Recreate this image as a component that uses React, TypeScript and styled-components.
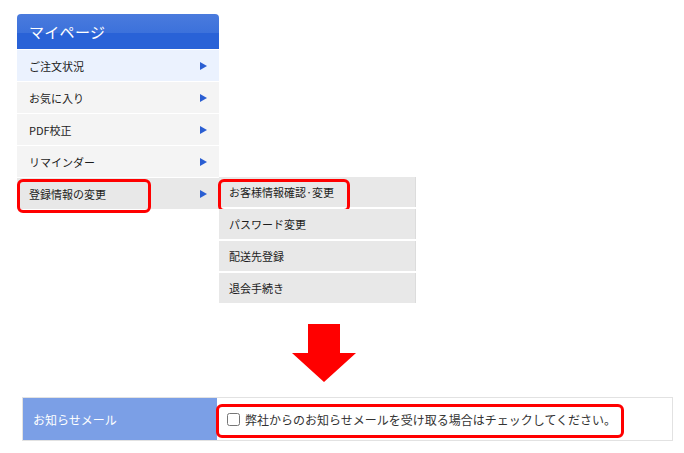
import React from 'react'
import styled, { createGlobalStyle } from 'styled-components'

const GlobalStyle = createGlobalStyle`
  body {
    margin: 0;
    background: #fff;
    font-family: "Noto Sans CJK JP", "Noto Sans", sans-serif;
    color: #1c1c1c;
  }
`

const Page = styled.div`
  width: 684px;
  height: 453px;
  padding: 14px 0 0 17px;
  box-sizing: border-box;
  overflow: hidden;
`

const Top = styled.div`
  display: flex;
  align-items: flex-start;
`

const Menu = styled.div`
  width: 202px;
  display: flex;
  flex-direction: column;
  gap: 1px;
`

const MenuHead = styled.div`
  height: 35px;
  display: flex;
  align-items: center;
  padding-left: 12px;
  border-radius: 4px 4px 0 0;
  background: linear-gradient(#4a7bdd 0%, #3c71db 54%, #2962d7 54%, #2962d7 100%);
  color: #fff;
  font-size: 15px;
  letter-spacing: 0.3px;
`

const MenuRow = styled.div<{ $tone: 'active' | 'plain' | 'open' }>`
  position: relative;
  height: 31px;
  display: flex;
  align-items: center;
  justify-content: space-between;
  padding: 0 12px;
  font-size: 11px;
  background: ${(p) => (p.$tone === 'active' ? '#ebf2fe' : p.$tone === 'open' ? '#e8e8e8' : '#f4f4f4')};
`

const Arrow = styled.span`
  width: 0;
  height: 0;
  border-top: 4.5px solid transparent;
  border-bottom: 4.5px solid transparent;
  border-left: 7px solid #2a5ed2;
`

const Highlight = styled.div<{ $l: number; $t: number; $w: number; $h: number }>`
  position: absolute;
  left: ${(p) => p.$l}px;
  top: ${(p) => p.$t}px;
  width: ${(p) => p.$w}px;
  height: ${(p) => p.$h}px;
  border: 3px solid #ff0000;
  border-radius: 6px;
  box-sizing: border-box;
  pointer-events: none;
`

const SubMenu = styled.div`
  margin-top: 163px;
  width: 197px;
  display: flex;
  flex-direction: column;
  gap: 2px;
`

const SubRow = styled.div`
  position: relative;
  height: 30px;
  display: flex;
  align-items: center;
  padding-left: 10px;
  font-size: 11px;
  background: #e8e8e8;
  border-right: 1px solid #dcdcdc;
  white-space: nowrap;
`

const Dot = styled.span`
  font-size: 6px;
  font-weight: 700;
`

const DownArrow = styled.svg`
  display: block;
  margin: 21px 0 0 275px;
`

const Table = styled.div`
  margin-top: 15px;
  margin-left: 5px;
  width: 651px;
  height: 44px;
  display: flex;
  border: 1px solid #e2e2e2;
  box-sizing: border-box;
`

const LabelCell = styled.div`
  width: 194px;
  flex-shrink: 0;
  box-sizing: border-box;
  display: flex;
  align-items: center;
  padding-left: 10px;
  background: #7b9fe6;
  color: #fff;
  font-size: 12px;
`

const ValueCell = styled.div`
  position: relative;
  flex: 1;
  display: flex;
  align-items: center;
  padding-left: 10px;
  font-size: 12px;
  color: #333;
`

const Check = styled.input`
  width: 13px;
  height: 13px;
  margin: 0 5px 0 0;
`

const menuItems = ['ご注文状況', 'お気に入り', 'PDF校正', 'リマインダー', '登録情報の変更']
const subItems = ['パスワード変更', '配送先登録', '退会手続き']

export default function App() {
  return (
    <Page>
      <GlobalStyle />
      <Top>
        <Menu>
          <MenuHead>マイページ</MenuHead>
          {menuItems.map((item, i) => (
            <MenuRow key={item} $tone={i === 0 ? 'active' : i === 4 ? 'open' : 'plain'}>
              <span>{item}</span>
              <Arrow />
              {i === 4 && <Highlight $l={0} $t={1} $w={134} $h={34} />}
            </MenuRow>
          ))}
        </Menu>
        <SubMenu>
          <SubRow>
            <span>お客様情報確認</span>
            <Dot>・</Dot>
            <span>変更</span>
            <Highlight $l={-1} $t={2} $w={132} $h={33} />
          </SubRow>
          {subItems.map((item) => (
            <SubRow key={item}>{item}</SubRow>
          ))}
        </SubMenu>
      </Top>
      <DownArrow width="64" height="58" viewBox="0 0 64 58">
        <polygon points="16,0 48,0 48,29 64,29 32,58 0,29 16,29" fill="#ff0000" />
      </DownArrow>
      <Table>
        <LabelCell>お知らせメール</LabelCell>
        <ValueCell>
          <Check type="checkbox" />
          弊社からのお知らせメールを受け取る場合はチェックしてください。
          <Highlight $l={-1} $t={6} $w={408} $h={34} />
        </ValueCell>
      </Table>
    </Page>
  )
}
